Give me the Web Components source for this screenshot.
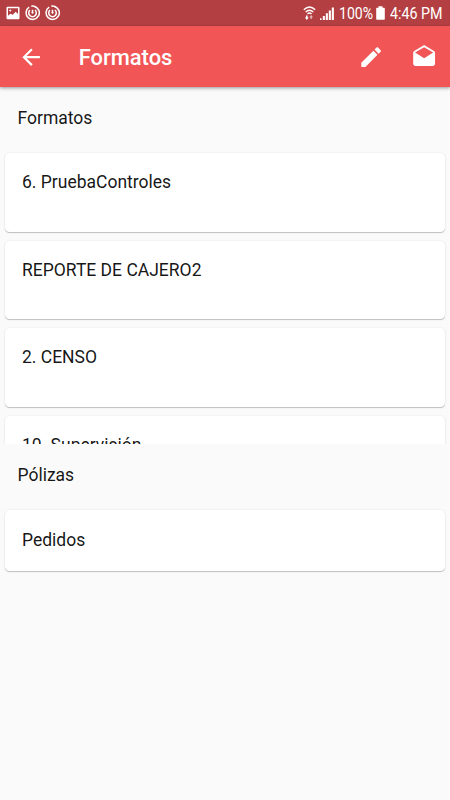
<!DOCTYPE html>
<html lang="es">
<head>
<meta charset="utf-8">
<title>Formatos</title>
<style>
html, body { margin: 0; height: 100%; }
body { background: #fafafa; font-family: Roboto, "Liberation Sans", sans-serif; overflow: hidden; }
</style>
</head>
<body>
<app-screen></app-screen>
<script>
const define = (name, html) => {
  const template = document.createElement('template');
  template.innerHTML = html;
  customElements.define(name, class extends HTMLElement {
    constructor() {
      super();
      this.attachShadow({ mode: 'open' }).append(template.content.cloneNode(true));
    }
  });
};

define('status-bar', `
<style>
:host { display: flex; align-items: center; box-sizing: border-box; height: 26px; padding: 0 8px 0 6px; background: #b43f42; color: #fff; font-size: 16.6px; line-height: 26px; }
svg { display: block; flex: none; }
.left { display: flex; gap: 5px; align-items: center; }
.right { display: flex; align-items: center; margin-left: auto; }
span { display: block; white-space: nowrap; transform-origin: left center; padding-top: 2px; }
.pct { width: 34px; transform: scaleX(.85); }
.time { width: 52px; transform: scaleX(.86); }
</style>
<div class="left">
  <svg width="14" height="14" viewBox="0 0 14 14"><path fill="#fff" fill-rule="evenodd" d="M1.5.7h11q1 0 1 1v10.6q0 1-1 1h-11q-1 0-1-1V1.7q0-1 1-1zM2 2.2v7.6l2.5-2 2.200 1 3-3L12 8V2.200zM4.200 3l.5 1 1 .5-1 .5-.5 1-.5-1-1-.5 1-.5z"/></svg>
  <svg width="15" height="16" viewBox="0 0 15 16" fill="none" stroke="#fff" stroke-width="1.5"><path d="M9.3 1.4A6.6 6.6 0 1 1 4.2 2.2M4.9 5.1A3.8 3.8 0 1 0 10 5M7.5 4.7V8M6.3 1.2A6.5 6.5 0 0 1 13.6 5.4"/><circle cx="7.5" cy="7.8" r="1" fill="#fff" stroke="none"/></svg>
  <svg width="15" height="16" viewBox="0 0 15 16" fill="none" stroke="#fff" stroke-width="1.5"><path d="M9.3 1.4A6.6 6.6 0 1 1 4.2 2.2M4.9 5.1A3.8 3.8 0 1 0 10 5M7.5 4.7V8M6.3 1.2A6.5 6.5 0 0 1 13.6 5.4"/><circle cx="7.5" cy="7.8" r="1" fill="#fff" stroke="none"/></svg>
</div>
<div class="right">
  <svg width="13" height="16" viewBox="0 0 13 16"><g fill="none" stroke="#fff" stroke-width="1.4"><path d="M.8 4.7Q6.5-.8 12.2 4.7M2.7 7Q6.5 3.3 10.3 7M4.5 9Q6.5 7.1 8.5 9"/></g><path fill="#fff" d="M3 10.5h1.6v2h1.2L3.8 15 1.8 12.5H3z"/><path fill="#fff" opacity=".65" d="M8.8 14h-1.3v-1.7H6.4l1.8-2.2 1.8 2.2H8.8z"/></svg>
  <svg width="14" height="14" viewBox="0 0 14 14" style="margin:1px 5px 0 4px"><path fill="#fff" d="M0 11.3h1.5V13H0zM2.800 9h2.100v4H2.800zM5.800 6.300h2.100V13H5.800zM8.800 3.500h2.100V13H8.800zM11.800.5h2.100V13h-2.100z"/></svg>
  <span class="pct">100%</span>
  <svg width="9" height="14" viewBox="0 0 9 14" style="margin:0 5px 0 3px"><path fill="#fff" d="M2.5.2h4v1.500H8q.8 0 .8.8V13q0 .8-.8.8H1q-.8 0-.8-.8V2.500q0-.8.8-.8h1.500z"/></svg>
  <span class="time">4:46 PM</span>
</div>`);

define('app-bar', `
<style>
:host { display: flex; align-items: center; box-sizing: border-box; height: 61.25px; padding: 0 13px 0 17.5px; background: #f15555; color: #fff; position: relative; z-index: 2; box-shadow: 0 1px 3px rgba(0,0,0,.32), 0 2px 5px rgba(0,0,0,.08); }
svg { width: 26.25px; height: 26.25px; fill: #fff; flex: none; display: block; }
h1 { flex: 1; margin: 0 0 0 35px; font-size: 21.9px; font-weight: 500; line-height: 28px; padding-top: 3px; }
.mail { margin-left: 26.25px; }
</style>
<svg viewBox="0 0 24 24"><path d="M20 11H7.830l5.590-5.590L12 4l-8 8 8 8 1.410-1.410L7.830 13H20v-2z"/></svg>
<h1><slot></slot></h1>
<svg viewBox="0 0 24 24"><path d="M3 17.250V21h3.750L17.810 9.940l-3.750-3.750L3 17.250zM20.710 7.040c.39-.39.39-1.020 0-1.410l-2.340-2.340c-.39-.39-1.020-.39-1.410 0l-1.830 1.830 3.750 3.750 1.830-1.830z"/></svg>
<svg class="mail" viewBox="0 0 24 24"><path d="M21.990 8c0-.72-.37-1.350-.94-1.700L12 1 2.950 6.300C2.380 6.650 2 7.280 2 8v10c0 1.100.9 2 2 2h16c1.100 0 2-.9 2-2l-.01-10zM12 13L3.740 7.840 12 3l8.260 4.840L12 13z"/></svg>`);

define('section-title', `
<style>
:host { display: flex; align-items: center; box-sizing: border-box; height: 61.5px; padding-left: 17.5px; font-size: 17.5px; line-height: 20px; color: rgba(0,0,0,.92); }
</style><slot></slot>`);

define('format-card', `
<style>
:host { display: block; box-sizing: border-box; height: var(--card-height, 78.5px); margin: 4.5px 4.7px; padding: var(--card-inset, 19.2px) 17.3px 0; border-radius: 4.4px; background: #fff; font-size: 17.5px; line-height: 21px; color: rgba(0,0,0,.92); box-shadow: 0 1px 1px rgba(0,0,0,.22), 0 0 2px rgba(0,0,0,.09); }
</style><slot></slot>`);

define('card-list', `
<style>
:host { display: flex; flex-direction: column; box-sizing: border-box; overflow: hidden; }
::slotted(*) { flex: none; }
</style><slot></slot>`);

define('app-screen', `
<style>
:host { display: flex; flex-direction: column; width: 450px; height: 800px; overflow: hidden; background: #fafafa; }
:host > * { flex: none; }
.formats { height: 295.2px; }
.policies { --card-height: 61px; --card-inset: 20px; height: 294px; }
</style>
<status-bar></status-bar>
<app-bar>Formatos</app-bar>
<section-title>Formatos</section-title>
<card-list class="formats">
  <format-card>6. PruebaControles</format-card>
  <format-card>REPORTE DE CAJERO2</format-card>
  <format-card>2. CENSO</format-card>
  <format-card>10. Supervisión</format-card>
</card-list>
<section-title>Pólizas</section-title>
<card-list class="policies"><format-card>Pedidos</format-card></card-list>`);
</script>
</body>
</html>
